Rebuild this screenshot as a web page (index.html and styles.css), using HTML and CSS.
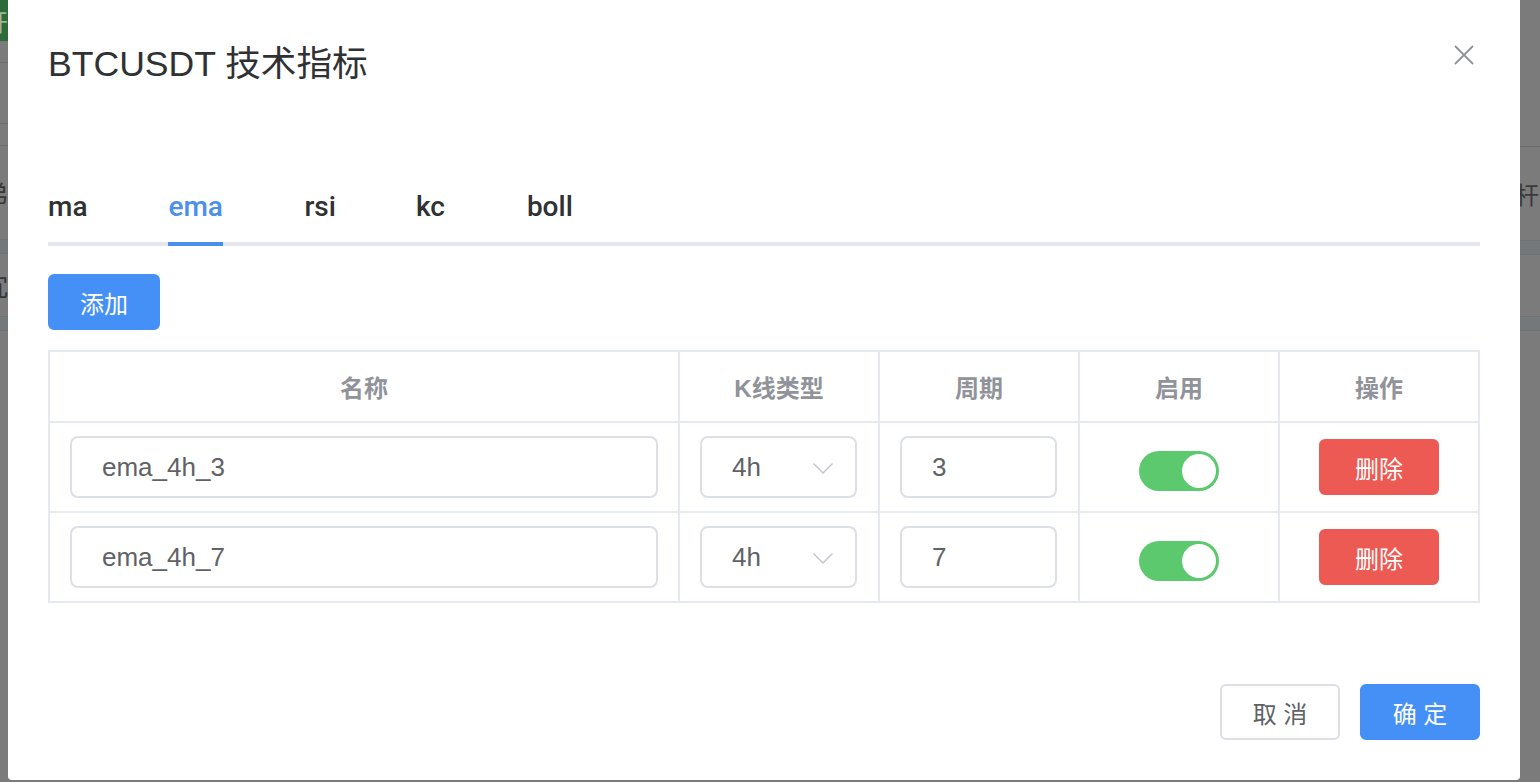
FILE: index.html
```html
<!DOCTYPE html>
<html lang="zh-CN">
<head>
<meta charset="utf-8">
<title>BTCUSDT 技术指标</title>
<link rel="stylesheet" href="styles.css">
</head>
<body>
<div class="page">
  <div class="page-left">
    <div class="pl-top"><span class="frag frag-light">开</span></div>
    <div class="pl-row h22"></div>
    <div class="pl-row h61"></div>
    <div class="pl-row h21"></div>
    <div class="pl-cell h93"><span class="frag">弟</span></div>
    <div class="band"></div>
    <div class="pl-cell h62"><span class="frag">冗</span></div>
    <div class="band"></div>
  </div>
  <div class="page-right">
    <div class="pr-row h147"></div>
    <div class="pr-cell h93"><span class="frag-r">杆</span></div>
    <div class="band"></div>
    <div class="pr-cell h61"></div>
    <div class="band"></div>
  </div>
</div>

<div class="dialog">
  <div class="dialog-header">
    <span class="dialog-title">BTCUSDT 技术指标</span>
    <button class="dialog-close" aria-label="关闭">
      <svg width="20" height="20" viewBox="0 0 20 20"><path d="M1 1L19 19M19 1L1 19" stroke="#909399" stroke-width="1.8" fill="none"/></svg>
    </button>
  </div>
  <div class="dialog-body">
    <div class="tabs">
      <div class="tab"><span class="tab-label">ma</span></div>
      <div class="tab active"><span class="tab-label">ema</span></div>
      <div class="tab"><span class="tab-label">rsi</span></div>
      <div class="tab"><span class="tab-label">kc</span></div>
      <div class="tab"><span class="tab-label">boll</span></div>
    </div>
    <button class="btn btn-primary btn-add">添加</button>
    <div class="table">
      <div class="th">名称</div>
      <div class="th">K线类型</div>
      <div class="th">周期</div>
      <div class="th">启用</div>
      <div class="th">操作</div>

      <div class="td"><div class="input input-wide">ema_4h_3</div></div>
      <div class="td"><div class="input select"><span>4h</span><svg class="chev" width="20" height="11" viewBox="0 0 20 11"><path d="M0.5 0.5L10 10L19.5 0.5" stroke="#c0c4cc" stroke-width="1.4" fill="none"/></svg></div></div>
      <div class="td"><div class="input">3</div></div>
      <div class="td td-center"><div class="switch"><span class="knob"></span></div></div>
      <div class="td td-center"><button class="btn btn-danger">删除</button></div>

      <div class="td"><div class="input input-wide">ema_4h_7</div></div>
      <div class="td"><div class="input select"><span>4h</span><svg class="chev" width="20" height="11" viewBox="0 0 20 11"><path d="M0.5 0.5L10 10L19.5 0.5" stroke="#c0c4cc" stroke-width="1.4" fill="none"/></svg></div></div>
      <div class="td"><div class="input">7</div></div>
      <div class="td td-center"><div class="switch"><span class="knob"></span></div></div>
      <div class="td td-center"><button class="btn btn-danger">删除</button></div>
    </div>
  </div>
  <div class="dialog-footer">
    <button class="btn btn-default">取 消</button>
    <button class="btn btn-primary btn-footer">确 定</button>
  </div>
</div>
</body>
</html>
```

FILE: styles.css
```css
* { box-sizing: border-box; }
html, body { margin: 0; padding: 0; }
body {
  width: 1540px;
  height: 782px;
  overflow: hidden;
  position: relative;
  background: #7b7b7b;
  font-family: "Liberation Sans", "Noto Sans CJK SC", sans-serif;
}

/* dimmed page behind the modal */
.page {
  display: flex;
  justify-content: space-between;
  height: 782px;
}
.page-left, .page-right {
  width: 120px;
  overflow: hidden;
  display: flex;
  flex-direction: column;
}
.pl-top {
  height: 41px;
  background: #2f6b3a;
  display: flex;
  align-items: center;
}
.pl-row, .pr-row { border-bottom: 1px solid #6e6e6e; }
.h22 { height: 22px; }
.h61 { height: 61px; }
.h21 { height: 22px; }
.h93 { height: 93px; }
.h62 { height: 62px; }
.h147 { height: 147px; }
.pl-cell, .pr-cell {
  display: flex;
  align-items: center;
}
.pr-cell { justify-content: flex-end; }
.band {
  height: 15px;
  background: #74787a;
  border-top: 1px solid #6f7273;
  border-bottom: 1px solid #6f7273;
}
.frag {
  font-size: 24px;
  color: #363636;
  margin-left: -16px;
}
.frag-light { color: #9fb3a2; }
.frag-r {
  font-size: 24px;
  color: #3a3a3a;
  margin-right: 1px;
}

/* dialog */
.dialog {
  position: absolute;
  left: 8px;
  top: 0;
  width: 1512px;
  height: 780px;
  background: #fff;
  border-radius: 0 0 4px 4px;
  display: flex;
  flex-direction: column;
}
.dialog-header {
  padding: 40px 40px 18px;
  display: flex;
  justify-content: space-between;
  align-items: flex-start;
}
.dialog-title {
  font-size: 35.6px;
  line-height: 48px;
  color: #303133;
}
.dialog-close {
  margin: 5px 6px 0 0;
  padding: 0;
  border: 0;
  background: none;
  width: 20px;
  height: 20px;
  display: block;
}
.dialog-close svg { display: block; }

.dialog-body {
  padding: 60px 40px 61px;
  display: flex;
  flex-direction: column;
  align-items: flex-start;
}

.tabs {
  display: flex;
  width: 100%;
  height: 80px;
  box-shadow: inset 0 -4px 0 #e4e7ed;
  margin-bottom: 28px;
}
.tab {
  padding: 0 40px;
  height: 80px;
}
.tab:first-child { padding-left: 0; padding-right: 41px; }
.tab:nth-child(2) { padding-right: 41.5px; }
.tab:nth-child(4) { padding-right: 42px; }
.tab-label {
  display: block;
  height: 80px;
  line-height: 82px;
  font-family: Roboto, "Liberation Sans", sans-serif;
  font-size: 28px;
  font-weight: 500;
  color: #303133;
}
.tab.active .tab-label {
  color: #4a90ea;
  box-shadow: inset 0 -4px 0 #4a90ea;
}

.btn {
  font-family: "Liberation Sans", "Noto Sans CJK SC", sans-serif;
  font-size: 24px;
  height: 56px;
  border-radius: 6px;
  border: 2px solid transparent;
  padding: 0;
  display: flex;
  align-items: center;
  justify-content: center;
  white-space: pre;
}
.btn-primary { background: #4590f6; border-color: #4590f6; color: #fff; }
.btn-add { width: 112px; }
.btn-danger { background: #ec5a53; border-color: #ec5a53; color: #fff; width: 120px; }
.btn-default { background: #fff; border-color: #dcdfe6; color: #606266; width: 120px; }
.btn-footer { width: 120px; }

.table {
  margin-top: 20px;
  width: 1432px;
  display: grid;
  grid-template-columns: 630px 200px 200px 200px 200px;
  grid-template-rows: 71px 90px 90px;
  border-top: 2px solid #e6e9ef;
  border-left: 2px solid #e6e9ef;
}
.th, .td {
  border-right: 2px solid #e6e9ef;
  border-bottom: 2px solid #e6e9ef;
  display: flex;
  align-items: center;
}
.th {
  justify-content: center;
  font-size: 24px;
  font-weight: 700;
  color: #909399;
}
.td { padding: 0 20px; }
.td-center { justify-content: center; }

.input {
  width: 157px;
  height: 62px;
  border: 2px solid #dcdfe6;
  border-radius: 8px;
  padding: 0 30px;
  display: flex;
  align-items: center;
  font-size: 26px;
  color: #606266;
}
.input-wide { width: 100%; }
.select {
  justify-content: space-between;
  padding-right: 22px;
}
.chev { display: block; margin-top: 2px; }

.switch {
  width: 80px;
  height: 40px;
  margin-top: 8px;
  border-radius: 20px;
  background: #5cc96e;
  padding: 3px;
  display: flex;
  justify-content: flex-end;
  align-items: center;
}
.knob {
  width: 34px;
  height: 34px;
  border-radius: 50%;
  background: #fff;
}

.dialog-footer {
  padding: 20px 40px 40px;
  display: flex;
  justify-content: flex-end;
  gap: 20px;
}
```
